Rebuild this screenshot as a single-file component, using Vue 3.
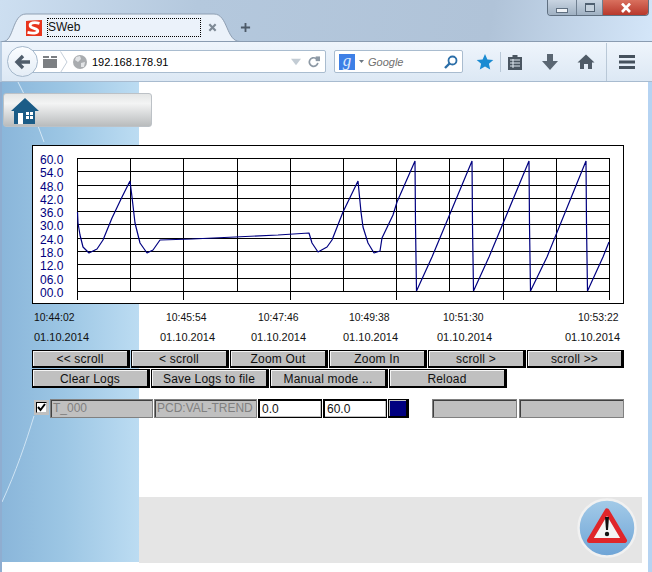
<template>
  <div class="window">
    <header class="titlebar">
      <svg class="tab-shape" width="260" height="42" viewBox="0 0 260 42">
        <path d="M3 41.5C14 41.5 12 14 26 14H214C228 14 226 41.5 240 41.5" fill="#ebf2fa" stroke="#8f9fb2" />
      </svg>
      <div class="tab">
        <svg class="favicon" width="16" height="16" viewBox="0 0 16 16">
          <path d="M0 1L5 0.5L16 0V16L0 16Z" fill="#e8341c" />
          <path d="M13.5 3.4C8 1.6 3.6 3 4.2 6C4.8 8.8 11.8 8 11.8 11C11.8 13.2 7 13.8 1.5 12.4" fill="none" stroke="#fff" stroke-width="2.8" />
        </svg>
        <span class="tab-title">SWeb</span>
        <svg class="tab-close" width="9" height="9" viewBox="0 0 10 10">
          <path d="M1.5 1.5L8.5 8.5M8.5 1.5L1.5 8.5" stroke="#7e8a96" stroke-width="2.4" />
        </svg>
      </div>
      <svg class="new-tab" width="11" height="11" viewBox="0 0 12 12">
        <path d="M6 1V11M1 6H11" stroke="#4d5a68" stroke-width="2" />
      </svg>
      <div class="win-buttons">
        <div class="win-btn"><span class="min-glyph"></span></div>
        <div class="win-btn narrow"><span class="max-glyph"></span></div>
        <div class="win-btn close">
          <svg width="12" height="10" viewBox="0 0 12 10">
            <path d="M2 0.5L10 9M10 0.5L2 9" stroke="#fff" stroke-width="2.6" />
          </svg>
        </div>
      </div>
    </header>

    <div class="toolbar">
      <div class="back">
        <svg width="18" height="16" viewBox="0 0 18 16">
          <path d="M16 8H3M9 2L3 8L9 14" fill="none" stroke="#4f5d6b" stroke-width="3.4" />
        </svg>
      </div>
      <div class="urlbar">
        <svg class="folder" width="14" height="12" viewBox="0 0 14 12">
          <path d="M0 0H6V2H0ZM8 0H14V2H8ZM0 3H14V12H0Z" fill="#7c7f82" />
        </svg>
        <svg class="chevron" width="8" height="22" viewBox="0 0 8 22">
          <path d="M0.5 0.5L7 11L0.5 21.5" fill="none" stroke="#c4ced9" />
        </svg>
        <svg class="globe" width="14" height="14" viewBox="0 0 14 14">
          <circle cx="7" cy="7" r="7" fill="#a9acaf" />
          <path d="M3 2L7 1L8 4L5 7L2 5ZM8 8L12 7L11 12L8 12Z" fill="#e2e4e6" />
        </svg>
        <span class="url">192.168.178.91</span>
        <svg class="drop" width="10" height="8" viewBox="0 0 14 9">
          <path d="M0 0H14L7 9Z" fill="#c3ccd4" />
        </svg>
        <svg class="reload" width="12" height="12" viewBox="0 0 14 14">
          <path d="M11.5 8A5 5 0 1 1 9.5 3H12" fill="none" stroke="#8d99a5" stroke-width="2" />
          <path d="M9 0.5V6H14V0.5Z" fill="#8d99a5" />
        </svg>
      </div>
      <div class="searchbar">
        <span class="g-logo">g</span>
        <svg width="5" height="3" viewBox="0 0 5 3"><path d="M0 0H5L2.5 3Z" fill="#6c7883" /></svg>
        <span class="search-text">Google</span>
        <svg class="lens" width="14" height="14" viewBox="0 0 14 14">
          <circle cx="8.5" cy="5.5" r="4" fill="none" stroke="#2b6ea8" stroke-width="1.8" />
          <path d="M5.5 8.5L1 13" stroke="#2b6ea8" stroke-width="2.4" />
        </svg>
      </div>
      <svg class="tool star" width="18" height="18" viewBox="0 0 18 18">
        <polygon points="9,1 11.4,6.4 17.3,7 12.9,10.8 14.2,16.6 9,13.6 3.8,16.6 5.1,10.8 .7,7 6.6,6.4" fill="#1a8bd2" />
      </svg>
      <span class="sep sep-a"></span>
      <svg class="tool clip" width="18" height="18" viewBox="0 0 18 18">
        <path d="M6.5 2H11.5V4H16V17H2V4H6.5Z" fill="#4a5661" />
        <path d="M4 7H14M4 10H14M4 13H14M7 6V15" stroke="#dfe8f1" stroke-width="1" />
      </svg>
      <svg class="tool arrow" width="18" height="18" viewBox="0 0 18 18">
        <path d="M6 1H12V8H17L9 17L1 8H6Z" fill="#5a6672" />
      </svg>
      <svg class="tool home" width="18" height="18" viewBox="0 0 18 18">
        <path d="M9 1.5L17.5 9.5H15V16H11V11H7V16H3V9.5H0.5Z" fill="#4f5b67" />
      </svg>
      <span class="sep sep-b"></span>
      <svg class="tool menu" width="18" height="18" viewBox="0 0 18 18">
        <path d="M1 3.5H17M1 9H17M1 14.5H17" stroke="#45515d" stroke-width="3" />
      </svg>
    </div>

    <main class="page">
      <div class="side">
        <svg width="137" height="480" viewBox="0 0 137 480">
          <path d="M0 420C14 390 24 360 32 334" fill="none" stroke="#cfe4f4" stroke-width="1" />
          <path d="M16 0L22 12M36 44L42 60" fill="none" stroke="#d5e8f6" stroke-width="1" />
        </svg>
      </div>

      <div class="home-btn">
        <svg width="28" height="26" viewBox="0 0 28 26">
          <path d="M14 0L28 13H24V26H3V13H0Z" fill="#1b5c87" />
          <path d="M7 15H12V26H7Z" fill="#fff" />
          <path d="M15 14H22V21H15Z" fill="#fff" />
          <path d="M18.5 14V21M15 17.5H22" stroke="#1b5c87" stroke-width="1" />
        </svg>
      </div>

      <svg class="chart" width="592" height="200" viewBox="32 145 592 200">
        <g shape-rendering="crispEdges">
          <rect x="32.5" y="145.5" width="591" height="158" fill="#fff" stroke="#000" />
          <line v-for="y in rows" :key="'h' + y" x1="77" :y1="y + 0.5" x2="610" :y2="y + 0.5" stroke="#000" />
          <line v-for="x in cols" :key="'v' + x" :x1="x + 0.5" y1="158" :x2="x + 0.5" y2="292" stroke="#000" />
          <line v-for="x in ticks" :key="'t' + x" :x1="x + 0.5" y1="292" :x2="x + 0.5" y2="300" stroke="#000" />
        </g>
        <polyline :points="curve" fill="none" stroke="#000080" stroke-width="1.2" stroke-linejoin="bevel" />
        <text v-for="(label, i) in yLabels" :key="label" class="y-label" x="40" :y="rows[i] + 6">{{ label }}</text>
        <g v-for="t in stamps" :key="t.time">
          <text class="time-label" :x="t.tx" y="321">{{ t.time }}</text>
          <text class="date-label" :x="t.dx" y="341">01.10.2014</text>
        </g>
      </svg>

      <div class="controls">
        <div class="row six">
          <button v-for="b in scrollButtons" :key="b" class="btn">{{ b }}</button>
        </div>
        <div class="row five">
          <button v-for="b in logButtons" :key="b" class="btn">{{ b }}</button>
        </div>
        <div class="fields">
          <span class="check">
            <span class="check-box">
              <svg width="9" height="9" viewBox="0 0 9 9">
                <path d="M1 4L3.5 7L8 1" fill="none" stroke="#000" stroke-width="2" />
              </svg>
            </span>
          </span>
          <div class="field off wide">T_000</div>
          <div class="field off wide">PCD:VAL-TREND</div>
          <div class="field on">0.0</div>
          <div class="field on">60.0</div>
          <div class="swatch"></div>
          <div class="field off blank-a"></div>
          <div class="field off blank-b"></div>
        </div>
      </div>

      <footer class="footer">
        <svg width="60" height="60" viewBox="0 0 60 60">
          <defs>
            <linearGradient id="alertBg" x1="0" y1="0" x2="0" y2="1">
              <stop offset="0" stop-color="#a4cbe8" />
              <stop offset="1" stop-color="#6ea4d6" />
            </linearGradient>
          </defs>
          <circle cx="30" cy="30" r="28.5" fill="url(#alertBg)" stroke="#f1f1f1" stroke-width="2.5" />
          <path d="M30 13L47.5 42.5H12.5Z" fill="#f4f4f4" stroke="#e0262a" stroke-width="5" stroke-linejoin="round" />
          <path d="M28 19H32L31 32H29Z" fill="#111" />
          <circle cx="30" cy="36" r="2.2" fill="#111" />
        </svg>
      </footer>
    </main>
  </div>
</template>

<script setup>
const rows = [158, 171, 185, 198, 211, 224, 238, 251, 264, 278, 291]
const cols = [77, 130, 183, 237, 290, 343, 396, 449, 503, 556, 609]
const ticks = [77, 183, 290, 396, 503, 609]
const yLabels = ['60.0', '54.0', '48.0', '42.0', '36.0', '30.0', '24.0', '18.0', '12.0', '06.0', '00.0']

const curve = [
  '77.5,212', '78,223', '80,235', '83,247', '89,253', '97,249', '103,240', '112,218', '122,197', '130,181',
  '132,197', '135,223', '140,243', '147,253', '153,250', '160,240', '192,239', '235,237', '278,235', '309,233',
  '312,243', '318,252', '327,247', '332,240', '343,212', '358,181', '361,212', '363,227', '368,243', '374,253',
  '380,251', '382,238', '393,215', '397,202', '415,161', '415.5,225', '416.5,291', '432,257', '472,161', '472.5,225',
  '473.5,291', '489,257', '529,161', '529.5,225', '530.5,291', '547,257', '586,161', '586.5,225', '587.5,291', '603,257',
  '609,242'
].join(' ')

const stamps = [
  { time: '10:44:02', tx: 34, dx: 34 },
  { time: '10:45:54', tx: 166, dx: 160 },
  { time: '10:47:46', tx: 258, dx: 251 },
  { time: '10:49:38', tx: 349, dx: 343 },
  { time: '10:51:30', tx: 443, dx: 437 },
  { time: '10:53:22', tx: 578, dx: 565 }
]

const scrollButtons = ['<< scroll', '< scroll', 'Zoom Out', 'Zoom In', 'scroll >', 'scroll >>']
const logButtons = ['Clear Logs', 'Save Logs to file', 'Manual mode ...', 'Reload']
</script>

<style>
html,
body {
  margin: 0;
  background: #fff;
  overflow: hidden;
}
</style>

<style scoped>
.window {
  position: relative;
  width: 652px;
  height: 572px;
  overflow: hidden;
  font-family: "Liberation Sans", Arial, sans-serif;
  background: #fff;
}

/* title bar */
.titlebar {
  position: relative;
  height: 41px;
  display: flex;
  align-items: flex-start;
  background: linear-gradient(100deg, #cddff1 0%, #b4c8dd 30%, #b0c3d8 75%, #d4e6f9 100%);
}

.tab-shape {
  position: absolute;
  left: 0;
  top: 0;
}

.tab {
  position: relative;
  display: flex;
  align-items: center;
  margin: 18px 0 0 26px;
  height: 19px;
}

.favicon {
  margin-right: 5px;
}

.tab-title {
  width: 152px;
  height: 17px;
  line-height: 17px;
  border: 1px dotted #000;
  font-size: 12px;
  color: #111;
}

.tab-close {
  margin-left: 7px;
}

.new-tab {
  position: relative;
  margin: 22px 0 0 23px;
}

.win-buttons {
  position: absolute;
  top: 0;
  right: 3px;
  display: flex;
  height: 15px;
  border: 1px solid #5f6f80;
  border-top: none;
  border-radius: 0 0 4px 4px;
  overflow: hidden;
}

.win-btn {
  width: 29px;
  box-sizing: border-box;
  display: flex;
  align-items: center;
  justify-content: center;
  background: linear-gradient(#c9d5e2, #9fb0c2);
  border-right: 1px solid #6f7f90;
}

.win-btn.narrow {
  width: 26px;
}

.win-btn.close {
  width: 45px;
  border-right: none;
  background: linear-gradient(#d9705e, #b8382c);
}

.min-glyph {
  width: 10px;
  height: 3px;
  margin-top: 6px;
  background: #eef2f6;
  border: 1px solid #5f6f80;
}

.max-glyph {
  width: 8px;
  height: 6px;
  background: #c5d1dd;
  border: 1px solid #4f5f70;
  border-top-width: 2px;
}

/* toolbar */
.toolbar {
  position: relative;
  height: 41px;
  box-sizing: border-box;
  display: flex;
  align-items: center;
  padding-left: 7px;
  background: linear-gradient(#eff5fc, #dce8f4);
  border-top: 1px solid #8a9cb1;
  border-bottom: 1px solid #a8bbcf;
  border-left: 2px solid #b9cde2;
}

.back {
  position: relative;
  z-index: 1;
  width: 31px;
  height: 31px;
  margin: 0 -8px 0 -2px;
  box-sizing: border-box;
  display: flex;
  align-items: center;
  justify-content: center;
  border: 1px solid #a5b8cb;
  border-radius: 50%;
  background: linear-gradient(#fbfdff, #e4edf6);
}

.urlbar,
.searchbar {
  display: flex;
  align-items: center;
  height: 23px;
  box-sizing: border-box;
  background: #fff;
  border: 1px solid #a9bccf;
  border-radius: 2px;
}

.urlbar {
  width: 296px;
  padding: 0 5px 0 12px;
}

.folder {
  margin-right: 3px;
}

.chevron {
  margin-right: 5px;
}

.globe {
  margin-right: 5px;
}

.url {
  font-size: 11px;
  color: #000;
  flex: 1;
}

.drop {
  margin-right: 7px;
}

.searchbar {
  width: 129px;
  margin-left: 8px;
  padding: 0 4px;
}

.g-logo {
  width: 16px;
  height: 16px;
  margin-right: 4px;
  background: #3d7fe6;
  color: #dfeafc;
  font: italic 17px/13px "Liberation Serif", serif;
  text-align: center;
}

.search-text {
  margin-left: 4px;
  flex: 1;
  font-size: 11px;
  font-style: italic;
  color: #6f6f6f;
}

.tool {
  flex: none;
}

.star {
  margin-left: 13px;
}

.sep {
  width: 1px;
  background: #b9c8d7;
}

.sep-a {
  height: 20px;
  margin: 0 5px 0 6px;
}

.arrow {
  margin-left: 17px;
}

.home {
  margin-left: 18px;
}

.sep-b {
  height: 38px;
  margin: 0 11px;
}

/* page */
.page {
  position: relative;
  height: 490px;
  box-sizing: border-box;
  padding-top: 11px;
  background: #fff;
  border-left: 2px solid #8fadd0;
  border-right: 4px solid #b5d3f2;
}

.side {
  position: absolute;
  left: 0;
  top: 0;
  width: 137px;
  height: 480px;
  background: linear-gradient(90deg, #8ab6da 0%, #9cc6e4 45%, #bcdcf2 100%);
}

.side svg {
  display: block;
}

.home-btn {
  position: relative;
  width: 149px;
  height: 34px;
  margin-left: 1px;
  box-sizing: border-box;
  padding: 4px 0 0 7px;
  border: 1px solid #bcc1c6;
  border-radius: 3px;
  background: linear-gradient(#e4e6e6, #f3f4f4 30%, #b9bcbd);
}

.home-btn svg {
  display: block;
}

.chart {
  position: relative;
  display: block;
  margin: 18px 0 0 30px;
}

.y-label {
  font-size: 12px;
  fill: #000080;
}

.time-label {
  font-size: 10.4px;
  fill: #111;
}

.date-label {
  font-size: 11px;
  fill: #111;
}

.controls {
  position: relative;
  margin: 5px 0 0 30px;
  width: 592px;
}

.row {
  display: grid;
  gap: 1px;
}

.six {
  height: 18px;
  grid-template-columns: repeat(5, 98px) 97px;
}

.five {
  height: 19px;
  margin-top: 1px;
  grid-template-columns: repeat(4, 118px);
}

.btn {
  padding: 1px 0 0;
  margin: 0;
  box-sizing: border-box;
  font-family: inherit;
  font-size: 12px;
  letter-spacing: 0.2px;
  color: #111;
  background: #c0c0c0;
  border: 1px solid #000;
  border-right-width: 3px;
  border-bottom-width: 2px;
  box-shadow: inset 1px 1px 0 #f4f4f4;
}

.fields {
  display: flex;
  gap: 1px;
  height: 19px;
  margin: 11px 0 0 2px;
}

.check {
  width: 15px;
  height: 15px;
  margin-top: 1px;
  box-sizing: border-box;
  padding: 2px;
  background: #c0c0c0;
}

.check-box {
  display: flex;
  align-items: center;
  justify-content: center;
  width: 11px;
  height: 11px;
  box-sizing: border-box;
  background: #fff;
  border: 1px solid #000;
  border-right-color: #c0c0c0;
  border-bottom-color: #c0c0c0;
}

.check-box svg {
  flex: none;
}

.field {
  box-sizing: border-box;
  width: 64px;
  line-height: 17px;
  padding-left: 2px;
  font-size: 12px;
  white-space: nowrap;
  overflow: hidden;
}

.off {
  color: #808080;
  background: #c0c0c0;
  border: 1px solid #808080;
  box-shadow: inset 1px 1px 0 #404040;
}

.wide {
  width: 103px;
}

.on {
  color: #111;
  background: #fff;
  border: 2px solid #000;
  border-right-width: 1px;
  border-bottom-width: 1px;
  line-height: 16px;
  box-shadow: inset -1px -1px 0 #c0c0c0;
}

.swatch {
  width: 21px;
  box-sizing: border-box;
  background: #000080;
  border: 1px solid #000;
  border-right-width: 3px;
  border-bottom-width: 2px;
  box-shadow: inset 1px 1px 0 #c0c0c0;
}

.blank-a {
  width: 85px;
  margin-left: 22px;
}

.blank-b {
  width: 105px;
  margin-left: 1px;
}

.footer {
  position: relative;
  height: 66px;
  margin: 79px 6px 0 137px;
  box-sizing: border-box;
  display: flex;
  justify-content: flex-end;
  padding: 1px 5px 0 0;
  background: #e5e5e5;
}
</style>
